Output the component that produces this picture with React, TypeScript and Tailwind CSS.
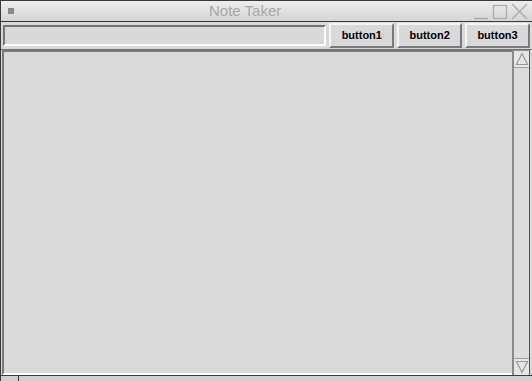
import React from "react";

const buttons = ["button1", "button2", "button3"] as const;

function WindowControls() {
  return (
    <div className="flex items-end gap-[3px] pr-[4px]">
      <svg width="16" height="16" viewBox="0 0 16 16" className="mb-[0px]">
        <line x1="1" y1="14.5" x2="15" y2="14.5" stroke="#a9a9a9" strokeWidth="1.5" />
      </svg>
      <svg width="16" height="16" viewBox="0 0 16 16">
        <rect x="1.5" y="1.5" width="13" height="13" fill="none" stroke="#a9a9a9" strokeWidth="1.2" />
      </svg>
      <svg width="17" height="17" viewBox="0 0 17 17">
        <path d="M1 1 L16 16 M16 1 L1 16" stroke="#a9a9a9" strokeWidth="1.2" />
      </svg>
    </div>
  );
}

export default function App() {
  return (
    <div
      className="flex h-[381px] w-[532px] flex-col overflow-hidden border-t border-l border-[#3a3a3a] bg-[#d9d9d9]"
      style={{ fontFamily: '"Liberation Sans", Arial, sans-serif' }}
    >
      {/* title bar */}
      <div className="relative flex h-[21px] shrink-0 items-center border-b border-[#3c3c3c] bg-gradient-to-b from-[#eeeeee] to-[#d4d4d4]">
        <div className="ml-[7px] h-[6px] w-[6px] bg-[#8a8a8a]" />
        <span className="absolute left-[208px] top-[1px] text-[15px] leading-[18px] text-[#a8a8a8]">Note Taker</span>
        <div className="ml-auto">
          <WindowControls />
        </div>
      </div>

      {/* toolbar */}
      <div className="flex h-[28px] shrink-0 items-center gap-[3px] border-b border-[#707070] pl-[2px] pr-[2px]">
        <div className="h-[21px] w-[324px] border-t-2 border-l-2 border-b-2 border-r-2 border-t-[#747474] border-l-[#747474] border-b-white border-r-white bg-[#d9d9d9]" />
        {buttons.map((b) => (
          <div
            key={b}
            className="flex h-[25px] w-[65px] items-center justify-center border-t-2 border-l-2 border-b-2 border-r-2 border-t-[#f4f4f4] border-l-[#f4f4f4] border-b-[#7a7a7a] border-r-[#7a7a7a] bg-[#d9d9d9] text-[11px] font-bold text-black"
          >
            {b}
          </div>
        ))}
      </div>

      {/* text area + scrollbar */}
      <div className="flex min-h-0 flex-1 pl-[1px] pr-[2px]">
        <div className="flex-1 border-t-2 border-l-2 border-[#7a7a7a] border-b-2 border-b-white bg-[#dadada]" />
        <div className="flex w-[18px] flex-col border-l-2 border-l-[#8a8a8a] border-r border-r-[#555] border-t border-t-[#8a8a8a] bg-[#dcdcdc]">
          <div className="flex h-[17px] items-center justify-center border-b border-[#a0a0a0] bg-[#e6e6e6]">
            <svg width="14" height="14" viewBox="0 0 14 14">
              <path d="M7 1.5 L12.5 12.5 L1.5 12.5 Z" fill="none" stroke="#9a9a9a" strokeWidth="1.2" />
            </svg>
          </div>
          <div className="flex-1" />
          <div className="flex h-[17px] items-center justify-center border-t border-[#a0a0a0] bg-[#e6e6e6]">
            <svg width="14" height="14" viewBox="0 0 14 14">
              <path d="M1.5 1.5 L12.5 1.5 L7 12.5 Z" fill="none" stroke="#9a9a9a" strokeWidth="1.2" />
            </svg>
          </div>
        </div>
      </div>

      {/* bottom strip */}
      <div className="flex h-[6px] shrink-0 border-t border-[#3c3c3c] bg-[#cfcfcf]">
        <div className="w-[18px] border-r border-[#3c3c3c]" />
      </div>
    </div>
  );
}
